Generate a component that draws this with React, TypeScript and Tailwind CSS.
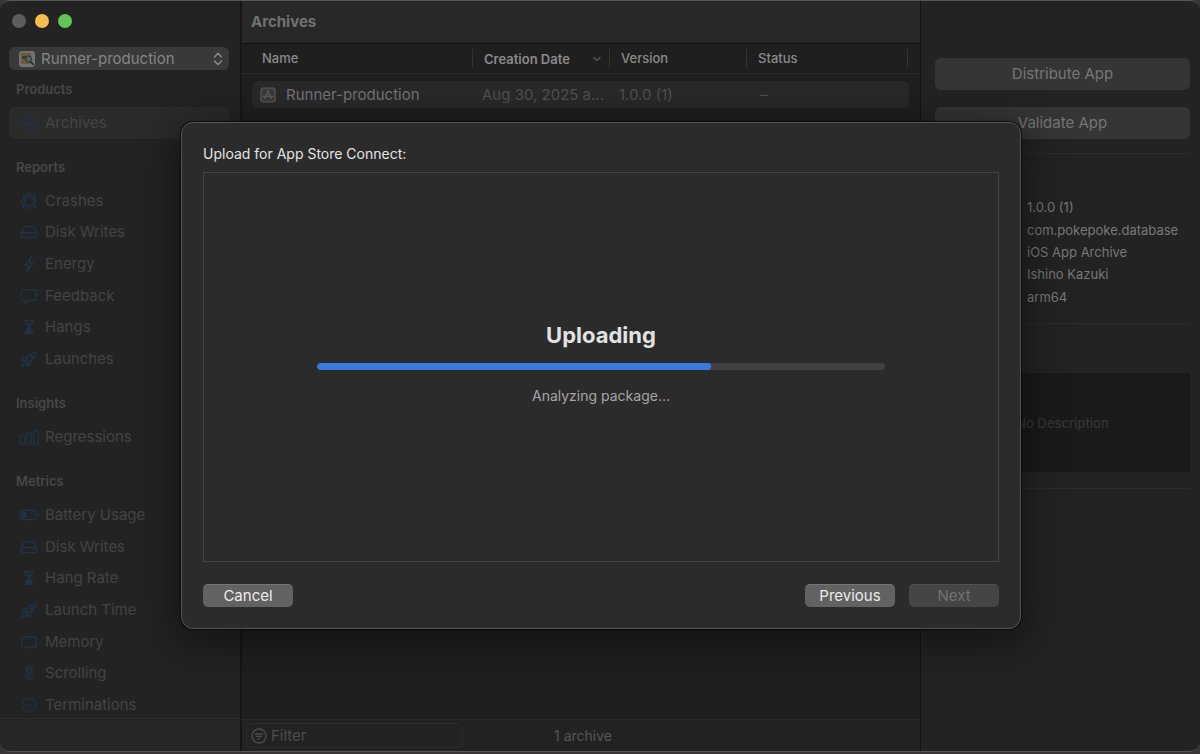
import type { ReactNode } from 'react'
import { FiChevronDown } from 'react-icons/fi'

type IconProps = { children: ReactNode }

function Icon({ children }: IconProps) {
  return (
    <svg
      viewBox="0 0 20 20"
      className="h-5 w-5 shrink-0"
      fill="none"
      stroke="currentColor"
      strokeWidth="1.2"
      strokeLinecap="round"
      strokeLinejoin="round"
      aria-hidden="true">
      {children}
    </svg>
  )
}

function ArchiveIcon({ fill = 'none' }: { fill?: string }) {
  return (
    <Icon>
      <rect x="3" y="3" width="14" height="14" rx="2.5" fill={fill} />
      <path d="M9.2 5.8 13.4 13.6M10.8 5.8 6.6 13.6M5.4 11.4h5M12.8 11.4h1.8" />
    </Icon>
  )
}

function CrashIcon() {
  return (
    <Icon>
      <circle cx="10" cy="10" r="4.6" strokeDasharray="2.4 1.2" />
      <path d="m8.3 4.8 1.7-3 1.7 3M13.4 5.2l3-1.4-1.2 3.2M15.2 8.3l3 1.7-3 1.7M15.2 13l1.2 3.2-3-1.4M11.7 15.2l-1.7 3-1.7-3M6.6 14.8l-3 1.4L4.8 13M4.8 11.7l-3-1.7 3-1.7M4.8 7 3.6 3.8l3 1.4" />
    </Icon>
  )
}

function DiskIcon() {
  return (
    <Icon>
      <path d="M2.4 11.6 4.6 5.8A2 2 0 0 1 6.5 4.4h7a2 2 0 0 1 1.9 1.4l2.2 5.8" />
      <rect x="2.2" y="10.6" width="15.6" height="5" rx="2" />
      <path d="M14.6 13.1h.4" />
    </Icon>
  )
}

function EnergyIcon() {
  return (
    <Icon>
      <path d="M12.2 2.8 5.8 10.8h3.8L7.8 17.2l6.4-8h-3.8z" />
    </Icon>
  )
}

function FeedbackIcon() {
  return (
    <Icon>
      <path d="M4.6 3.6h10.8a2.2 2.2 0 0 1 2.2 2.2v6.4a2.2 2.2 0 0 1-2.2 2.2H9.4l-3.2 2.8v-2.8H4.6a2.2 2.2 0 0 1-2.2-2.2V5.8a2.2 2.2 0 0 1 2.2-2.2z" />
    </Icon>
  )
}

function HourglassIcon() {
  return (
    <Icon>
      <path d="M5.8 3.6h8.4M5.8 16.4h8.4M6.8 3.6v2.2c0 2 3.2 2.8 3.2 4.2s-3.2 2.2-3.2 4.2v2.2M13.2 3.6v2.2c0 2-3.2 2.8-3.2 4.2s3.2 2.2 3.2 4.2v2.2" />
      <path d="M7.2 15.8c0-2 1.4-2.6 2.8-4 1.4 1.4 2.8 2 2.8 4zM8 7h4l-2 2z" fill="currentColor" />
    </Icon>
  )
}

function RocketIcon() {
  return (
    <Icon>
      <path d="M7 11.4C8.2 7.2 11.4 3.6 17 3c-.4 5.6-4.2 8.8-8.4 10z" />
      <path d="M8.4 8.2C5.8 7.6 4 9 3 11.4l4 .2M11.8 11.6c.6 2.6-.8 4.4-3.2 5.4l-.2-4M5.4 12.8C3.8 13.4 3.2 15 3 17c2-.2 3.6-.8 4.2-2.4" />
      <circle cx="12.6" cy="7.4" r="1.3" />
    </Icon>
  )
}

function BarsIcon() {
  return (
    <Icon>
      <rect x="1" y="8" width="4.4" height="9" rx="1" />
      <rect x="7.8" y="6" width="4.4" height="11" rx="1" />
      <rect x="14.6" y="3.6" width="4.4" height="13.4" rx="1" />
    </Icon>
  )
}

function BatteryIcon() {
  return (
    <Icon>
      <rect x=".8" y="5.4" width="16.4" height="9.2" rx="2.6" />
      <rect x="2.8" y="7.4" width="4" height="5.2" rx="1" fill="currentColor" />
      <path d="M19.2 9v2" />
    </Icon>
  )
}

function MemoryIcon() {
  return (
    <Icon>
      <rect x="2.6" y="5" width="14.8" height="10" rx="2.4" />
      <path d="M5.4 5V4M8.4 5V4M11.6 5V4M14.6 5V4M5.4 16v-1M8.4 16v-1M11.6 16v-1M14.6 16v-1" />
    </Icon>
  )
}

function ScrollIcon() {
  return (
    <Icon>
      <circle cx="10" cy="6.4" r="3.2" />
      <circle cx="10" cy="13.6" r="3.2" />
      <path d="m8.6 6.8 1.4-1.4 1.4 1.4M8.6 13.2l1.4 1.4 1.4-1.4" />
    </Icon>
  )
}

function TerminationIcon() {
  return (
    <Icon>
      <circle cx="10" cy="10" r="7" />
      <path d="M6.8 10h6.4" />
    </Icon>
  )
}

function AppIcon() {
  return (
    <svg viewBox="0 0 16 16" className="h-4 w-4" aria-hidden="true">
      <rect width="16" height="16" rx="3" fill="#727272" />
      <rect x="2" y="2" width="10" height="11" rx="1" fill="#6b5a38" />
      <path d="M3 5h4v3H3z" fill="#3d3a34" />
      <circle cx="9.5" cy="8" r="3" fill="#59636b" stroke="#2b2f33" />
      <path d="m11.6 10.4 3 3.6" stroke="#26292c" strokeWidth="1.6" />
    </svg>
  )
}

type GroupProps = { title: string; height: string; children: ReactNode }

function Group({ title, height, children }: GroupProps) {
  return (
    <section className="mb-5">
      <h2 className="mb-2.5 pl-4 text-[13px] leading-4 font-semibold text-[#474747]">
        {title}
      </h2>
      <ul className={`grid auto-rows-fr pr-[11px] pl-[9px] ${height}`}>{children}</ul>
    </section>
  )
}

type ItemProps = { icon: ReactNode; label: string; selected?: boolean }

function Item({ icon, label, selected }: ItemProps) {
  return (
    <li className="flex">
      <a
        href="#"
        className={`flex flex-1 items-center gap-1.5 rounded-md pl-2.5 text-[#444] ${
          selected ? 'bg-[#2b2b2a]' : ''
        }`}>
        <span className={selected ? 'text-[#24304a]' : 'text-[#1f344b]'}>{icon}</span>
        {label}
      </a>
    </li>
  )
}

function Sidebar() {
  return (
    <aside className="flex w-[242px] shrink-0 flex-col border-r-2 border-[#161616] bg-[#232323]">
      <div className="flex gap-[9px] px-3 pt-[13px] pb-[19px]">
        <button aria-label="Close" className="h-3.5 w-3.5 rounded-full bg-[#5d5d5d]" />
        <button aria-label="Minimize" className="h-3.5 w-3.5 rounded-full bg-[#f5bd4f]" />
        <button aria-label="Zoom" className="h-3.5 w-3.5 rounded-full bg-[#61c454]" />
      </div>
      <div className="relative mr-[11px] mb-[11px] ml-[9px] text-[#858585]">
        <select
          aria-label="Product"
          className="h-[23px] w-full appearance-none rounded-md bg-[#393939] pl-8">
          <option>Runner-production</option>
        </select>
        <span className="pointer-events-none absolute inset-y-0 left-2.5 flex items-center">
          <AppIcon />
        </span>
        <svg
          viewBox="0 0 10 14"
          className="pointer-events-none absolute inset-y-0 right-1.5 my-auto h-3.5 w-2.5"
          fill="none"
          stroke="currentColor"
          strokeWidth="1.6"
          strokeLinecap="round"
          strokeLinejoin="round"
          aria-hidden="true">
          <path d="m1.5 5 3.5-3.6L8.5 5M1.5 9 5 12.6 8.5 9" />
        </svg>
      </div>
      <nav className="min-h-0 flex-1 overflow-hidden">
        <Group title="Products" height="h-8">
          <Item icon={<ArchiveIcon />} label="Archives" selected />
        </Group>
        <Group title="Reports" height="h-[190px]">
          <Item icon={<CrashIcon />} label="Crashes" />
          <Item icon={<DiskIcon />} label="Disk Writes" />
          <Item icon={<EnergyIcon />} label="Energy" />
          <Item icon={<FeedbackIcon />} label="Feedback" />
          <Item icon={<HourglassIcon />} label="Hangs" />
          <Item icon={<RocketIcon />} label="Launches" />
        </Group>
        <Group title="Insights" height="h-8">
          <Item icon={<BarsIcon />} label="Regressions" />
        </Group>
        <Group title="Metrics" height="h-[222px]">
          <Item icon={<BatteryIcon />} label="Battery Usage" />
          <Item icon={<DiskIcon />} label="Disk Writes" />
          <Item icon={<HourglassIcon />} label="Hang Rate" />
          <Item icon={<RocketIcon />} label="Launch Time" />
          <Item icon={<MemoryIcon />} label="Memory" />
          <Item icon={<ScrollIcon />} label="Scrolling" />
          <Item icon={<TerminationIcon />} label="Terminations" />
        </Group>
      </nav>
      <div className="h-[33px] shrink-0 border-t border-[#2e2e2e] bg-[#262625]" />
    </aside>
  )
}

function ArchiveTable() {
  return (
    <table className="w-full table-fixed border-collapse text-left">
      <thead className="text-[13px] text-[#8a8a8a]">
        <tr className="border-b border-[#2a2a2a]">
          <th className="w-[231px] p-0 font-medium">
            <div className="my-[5px] h-[19px] border-r border-[#333] pl-5 leading-[19px]">
              Name
            </div>
          </th>
          <th className="w-[137px] p-0 font-semibold">
            <div className="my-[5px] flex h-[19px] items-center justify-between border-r border-[#333] pr-1.5 pl-[11px]">
              Creation Date
              <FiChevronDown className="h-3 w-3" />
            </div>
          </th>
          <th className="w-[137px] p-0 font-medium">
            <div className="my-[5px] h-[19px] border-r border-[#333] pl-[11px] leading-[19px]">
              Version
            </div>
          </th>
          <th className="py-0 pr-3 pl-0 font-medium">
            <div className="my-[5px] h-[19px] border-r border-[#333] pl-[11px] leading-[19px]">
              Status
            </div>
          </th>
        </tr>
      </thead>
      <tbody className="text-[#505050]">
        <tr>
          <td className="pt-[7px] pr-0 pb-0 pl-2.5">
            <div className="flex h-[27px] items-center gap-2 rounded-l-md bg-[#292929] pl-1.5">
              <span className="text-[#5c5c5c]">
                <ArchiveIcon fill="#3a3a3a" />
              </span>
              <span className="text-[#737373]">Runner-production</span>
            </div>
          </td>
          <td className="px-0 pt-[7px] pb-0">
            <div className="h-[27px] bg-[#292929] pl-[9px] leading-[27px]">Aug 30, 2025 a...</div>
          </td>
          <td className="px-0 pt-[7px] pb-0">
            <div className="h-[27px] bg-[#292929] pl-[9px] leading-[27px]">1.0.0 (1)</div>
          </td>
          <td className="pt-[7px] pr-[11px] pb-0 pl-0">
            <div className="h-[27px] rounded-r-md bg-[#292929] pl-[13px] leading-[27px]">–</div>
          </td>
        </tr>
      </tbody>
    </table>
  )
}

function Archives() {
  return (
    <main className="flex min-w-0 flex-1 flex-col bg-[#1f1f1f]">
      <header className="h-[43px] shrink-0 border-b border-[#111] bg-[#282828] pl-[9px]">
        <h1 className="leading-[42px] font-bold text-[#717171]">Archives</h1>
      </header>
      <div className="min-h-0 flex-1">
        <ArchiveTable />
      </div>
      <footer className="grid h-8 shrink-0 grid-cols-3 items-center border-t border-[#2b2b2b] bg-[#222] pl-1">
        <label className="flex h-[25px] w-[217px] items-center gap-1 rounded-md border border-[#2c2c2c] pl-1 text-[#4d4d4d]">
          <svg
            viewBox="0 0 16 16"
            className="h-4 w-4 shrink-0"
            fill="none"
            stroke="currentColor"
            strokeWidth="1.3"
            strokeLinecap="round"
            aria-hidden="true">
            <circle cx="8" cy="8" r="7" />
            <path d="M4.4 6h7.2M5.6 8.4h4.8M7 10.8h2" />
          </svg>
          <input
            aria-label="Filter"
            placeholder="Filter"
            className="w-full bg-transparent placeholder:text-[#4d4d4d]"
          />
        </label>
        <p className="text-center text-[14px] text-[#565656]">1 archive</p>
      </footer>
    </main>
  )
}

const details = ['1.0.0 (1)', 'com.pokepoke.database', 'iOS App Archive', 'Ishino Kazuki', 'arm64']

function Inspector() {
  return (
    <aside className="w-[280px] shrink-0 border-l border-[#141414] bg-[#232323] pt-[57px] pr-2.5 pl-3.5">
      <div className="flex flex-col gap-[17px] border-b border-[#2b2b2b] pb-3.5 text-[#757575]">
        <button className="h-8 rounded-md bg-[#353535]">Distribute App</button>
        <button className="h-8 rounded-md bg-[#353535]">Validate App</button>
      </div>
      <ul className="mb-[15px] grid h-[154px] auto-rows-fr pt-[42px] pl-[92px] text-[13px] text-[#787878]">
        {details.map(text => (
          <li key={text} className="flex items-center">
            {text}
          </li>
        ))}
      </ul>
      <div className="border-y border-[#2b2b2b] pt-[49px] pb-4">
        <div className="flex h-[99px] items-center justify-center bg-[#1a1a1a] text-[13px] font-medium text-[#353535]">
          No Description
        </div>
      </div>
    </aside>
  )
}

function UploadSheet() {
  const progress = 69.4

  return (
    <div className="absolute inset-0 flex items-center justify-center pb-0.5 pl-0.5">
      <div
        role="dialog"
        aria-labelledby="sheet-title"
        className="w-full max-w-[840px] rounded-xl border border-[#555] bg-[#2b2b2b] p-[21px] shadow-[0_10px_40px_8px_rgba(0,0,0,0.4),0_0_1px_1px_rgba(0,0,0,0.6)]">
        <h2 id="sheet-title" className="mb-2 text-sm leading-5 text-[#e4e4e4]">
          Upload for App Store Connect:
        </h2>
        <div className="flex h-[390px] flex-col items-center justify-center border border-[#444] px-[113px] pb-2">
          <p className="mb-3 text-[22px] leading-8 font-bold text-[#e2e2e2]">Uploading</p>
          <div
            role="progressbar"
            aria-label="Uploading"
            aria-valuenow={progress}
            className="h-[7px] w-full overflow-hidden rounded-full bg-[#414141]">
            <div className="h-full rounded-full bg-[#3b7ae0]" style={{ width: `${progress}%` }} />
          </div>
          <p className="mt-4 text-sm leading-5 text-[#a5a5a5]">Analyzing package...</p>
        </div>
        <div className="mt-[22px] flex gap-3.5 text-[#ececec]">
          <button className="mr-auto h-[23px] w-[90px] rounded-[5px] border-t border-[#757575] bg-[#626262]">
            Cancel
          </button>
          <button className="h-[23px] w-[90px] rounded-[5px] border-t border-[#757575] bg-[#626262]">
            Previous
          </button>
          <button
            disabled
            className="h-[23px] w-[90px] rounded-[5px] border-t border-[#505050] bg-[#454545] text-[#727272]">
            Next
          </button>
        </div>
      </div>
    </div>
  )
}

function App() {
  return (
    <div className="h-screen bg-[#393535] pb-0.5 font-['Inter','Liberation_Sans',sans-serif] text-[15px] leading-5">
      <div className="relative flex h-full overflow-hidden rounded-[10px] border-y border-[#555]">
        <Sidebar />
        <Archives />
        <Inspector />
        <UploadSheet />
      </div>
    </div>
  )
}

export default App
